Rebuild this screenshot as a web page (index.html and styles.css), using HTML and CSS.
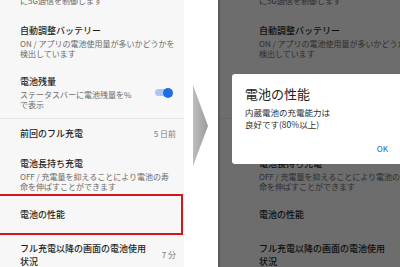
FILE: index.html
```html
<!DOCTYPE html>
<html lang="ja">
<head>
<meta charset="utf-8">
<link rel="stylesheet" href="styles.css">
</head>
<body>
<div class="page">
  <section class="panel panel-left">
    <div class="list">
      <p class="sub first">に5G通信を制御します</p>
      <div class="row">
        <div class="txt"><p class="title">自動調整バッテリー</p><p class="sub">ON / アプリの電池使用量が多いかどうかを<br>検出しています</p></div>
      </div>
      <div class="row">
        <div class="txt"><p class="title">電池残量</p><p class="sub">ステータスバーに電池残量を%<br>で表示</p></div>
        <span class="toggle"></span>
      </div>
      <div class="divider"></div>
      <div class="row"><p class="title">前回のフル充電</p><span class="meta">5 日前</span></div>
      <div class="row">
        <div class="txt"><p class="title">電池長持ち充電</p><p class="sub">OFF / 充電量を抑えることにより電池の寿<br>命を伸ばすことができます</p></div>
      </div>
      <div class="row hl boxed"><p class="title">電池の性能</p></div>
      <div class="row"><p class="title two">フル充電以降の画面の電池使用<br>状況</p><span class="meta">7 分</span></div>
    </div>
  </section>

  <div class="gap">
    <svg class="arrow" width="16" height="82" viewBox="0 0 16 82">
      <defs>
        <linearGradient id="ag" x1="0" y1="0" x2="1" y2="0">
          <stop offset="0" stop-color="#bdbdbd"/>
          <stop offset="1" stop-color="#9c9c9c"/>
        </linearGradient>
      </defs>
      <polygon points="0,0 15,41 0,81" fill="url(#ag)"/>
    </svg>
  </div>

  <section class="panel panel-right">
    <div class="list">
      <p class="sub first">に5G通信を制御します</p>
      <div class="row">
        <div class="txt"><p class="title">自動調整バッテリー</p><p class="sub">ON / アプリの電池使用量が多いかどうかを<br>検出しています</p></div>
      </div>
      <div class="row">
        <div class="txt"><p class="title">電池残量</p><p class="sub">ステータスバーに電池残量を%<br>で表示</p></div>
        <span class="toggle"></span>
      </div>
      <div class="divider"></div>
      <div class="row"><p class="title">前回のフル充電</p><span class="meta">5 日前</span></div>
      <div class="row">
        <div class="txt"><p class="title">電池長持ち充電</p><p class="sub">OFF / 充電量を抑えることにより電池の寿<br>命を伸ばすことができます</p></div>
      </div>
      <div class="row hl"><p class="title">電池の性能</p></div>
      <div class="row"><p class="title two">フル充電以降の画面の電池使用<br>状況</p><span class="meta">7 分</span></div>
    </div>
    <div class="scrim"></div>
    <div class="dialog">
      <p class="d-title">電池の性能</p>
      <p class="d-body">内蔵電池の充電能力は<br>良好です(80%以上)</p>
      <p class="d-actions"><span class="ok">OK</span></p>
    </div>
  </section>
</div>
</body>
</html>
```

FILE: styles.css
```css
* { box-sizing: border-box; }
html, body {
  margin: 0;
  padding: 0;
  background: #ffffff;
}
body {
  font-family: "Noto Sans CJK JP", "Noto Sans", sans-serif;
  width: 400px;
  height: 267px;
  overflow: hidden;
}
p { margin: 0; }

.page {
  display: flex;
  width: 400px;
  height: 267px;
}

.panel {
  position: relative;
  height: 267px;
  overflow: hidden;
  background: #f7f7f7;
}
.panel-left { width: 184px; flex: none; }
.panel-right {
  width: 182px;
  flex: none;
  border-left: 2px solid #5a5a5a;
}

.list {
  width: 205px;
  flex: none;
  margin-top: -4px;
  padding: 0 8px 0 41px;
}
.panel-left .list { margin-left: -21px; }
.panel-right .list { margin-left: -2px; }

.title {
  font-size: 9px;
  line-height: 12px;
  color: #1f1f1f;
  font-weight: 500;
  white-space: nowrap;
}
.title.two { line-height: 13px; }
.sub {
  font-size: 8px;
  line-height: 9.5px;
  color: #6a6a6a;
  white-space: nowrap;
  margin-top: 2px;
}
.sub.first {
  margin-top: 0;
  line-height: 10px;
  margin-bottom: 10px;
}

.row {
  position: relative;
  display: flex;
  align-items: center;
  justify-content: space-between;
  padding: 9px 0;
}
.row.hl { padding-bottom: 12px; }
.row.boxed::after {
  content: "";
  position: absolute;
  top: -6px;
  bottom: -2px;
  left: -50px;
  right: -7px;
  border: 2px solid #d5141c;
}

.meta {
  font-size: 8px;
  line-height: 10px;
  color: #7a7a7a;
  white-space: nowrap;
}

.divider {
  height: 1px;
  background: #e6e6e6;
  margin: 0 -8px 0 -41px;
}

.toggle {
  position: relative;
  width: 17px;
  height: 7px;
  border-radius: 4px;
  background: #a9c7f0;
  margin-right: 4px;
  flex: none;
}
.toggle::after {
  content: "";
  position: absolute;
  right: -1px;
  top: -1.5px;
  width: 10px;
  height: 10px;
  border-radius: 50%;
  background: #1b6fe0;
}

.gap {
  width: 34px;
  flex: none;
  display: flex;
  justify-content: flex-start;
  padding: 85px 0 0 9px;
}
.arrow { display: block; }

.scrim {
  position: absolute;
  inset: 0;
  background: rgba(0, 0, 0, 0.56);
}

.dialog {
  position: absolute;
  left: 12px;
  top: 74px;
  right: -10px;
  height: 90px;
  background: #ffffff;
  border-radius: 3px;
  padding: 12px 22px 0 13px;
}
.d-title {
  font-size: 13px;
  line-height: 16px;
  color: #222222;
}
.d-body {
  margin-top: 5px;
  font-size: 8.5px;
  line-height: 11.5px;
  color: #2e2e2e;
  white-space: nowrap;
}
.d-actions {
  margin-top: 14px;
  text-align: right;
  font-size: 8px;
  line-height: 10px;
}
.ok {
  color: #3f80c6;
  font-weight: 500;
}
```
